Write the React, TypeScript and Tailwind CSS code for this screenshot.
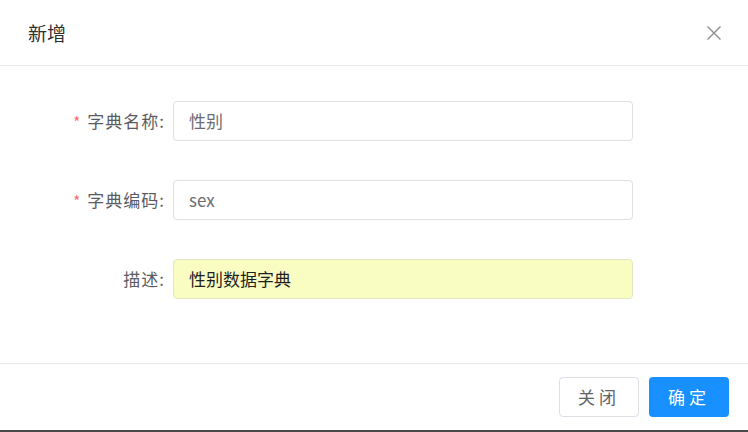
const ROWS = [
  { label: "字典名称", value: "性别", required: true, filled: false },
  { label: "字典编码", value: "sex", required: true, filled: false },
  { label: "描述", value: "性别数据字典", required: false, filled: true },
];

export default function App() {
  return (
    <div
      className="w-[748px] h-[432px] bg-white flex flex-col text-[#606266]"
      style={{ fontFamily: '"Noto Sans CJK SC", "Noto Sans", sans-serif' }}
    >
      {/* Header */}
      <div className="h-[66px] shrink-0 flex items-center justify-between pl-[28px] pr-[26px] border-b border-[#e8e8e8]">
        <span className="text-[19px] text-[#303133] leading-none">新增</span>
        <svg width="16" height="16" viewBox="0 0 16 16" className="text-[#8c8c8c]">
          <path d="M1.5 1.5 L14.5 14.5 M14.5 1.5 L1.5 14.5" stroke="currentColor" strokeWidth="1.4" fill="none" />
        </svg>
      </div>

      {/* Body */}
      <div className="flex-1 flex flex-col gap-[39px] pt-[35px]">
        {ROWS.map((r) => (
          <div key={r.label} className="flex items-center h-[40px]">
            <div className="w-[165px] shrink-0 flex items-center justify-end text-[17px] tracking-[1px] text-[#5a5c61]">
              {r.required && <span className="text-[#f56c6c] mr-[6px] text-[15px] mt-[3px]">*</span>}
              <span>{r.label}:</span>
            </div>
            <div
              className={`ml-[8px] w-[460px] h-[40px] rounded-[4px] border flex items-center pl-[15px] text-[17px] ${
                r.filled
                  ? "bg-[#fafdc2] border-[#e3e6c4] text-[#1f1f1f]"
                  : "bg-white border-[#dcdfe6] text-[#6b6d72]"
              }`}
            >
              {r.value}
            </div>
          </div>
        ))}
      </div>

      {/* Footer */}
      <div className="h-[67px] shrink-0 border-t border-[#e8e8e8] flex items-center justify-end gap-[10px] pr-[19px]">
        <button className="w-[80px] h-[40px] rounded-[4px] border border-[#dcdfe6] bg-white text-[17px] text-[#606266] tracking-[4px]">
          关闭
        </button>
        <button className="w-[80px] h-[40px] rounded-[4px] bg-[#1890ff] text-[17px] text-white tracking-[4px]">
          确定
        </button>
      </div>
      <div className="h-[2px] shrink-0 bg-[#4a4a4a]" />
    </div>
  );
}
